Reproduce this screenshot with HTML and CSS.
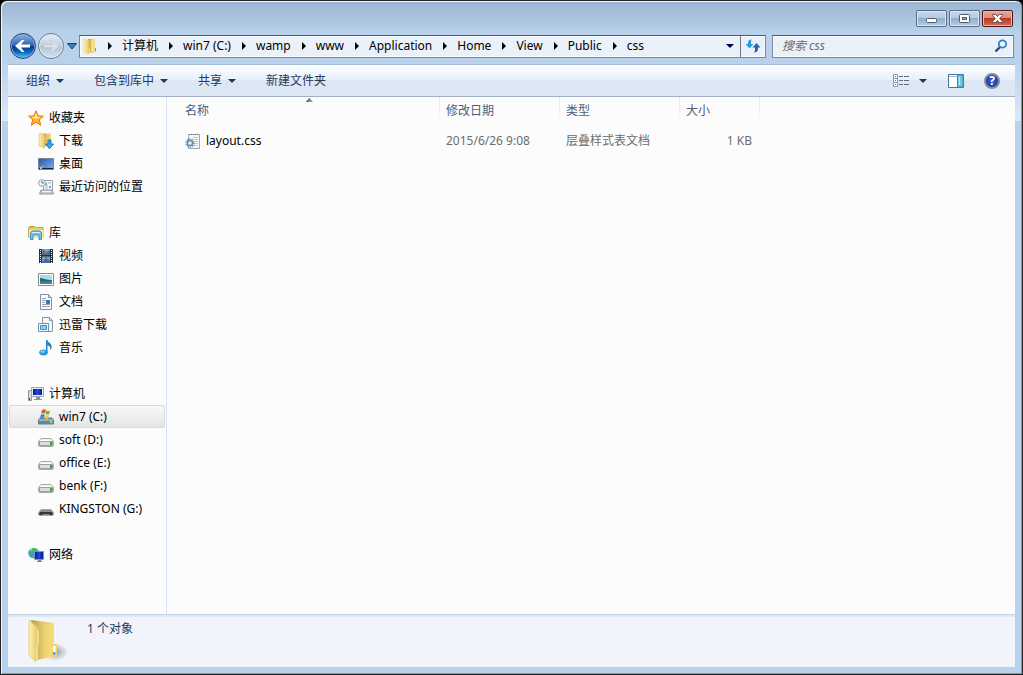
FILE: index.html
```html
<!DOCTYPE html>
<html lang="zh-CN">
<head>
<meta charset="utf-8">
<title>css</title>
<link rel="stylesheet" href="styles.css">
</head>
<body>
<svg class="defs" aria-hidden="true">
  <defs>
    <linearGradient id="gold" x1="0" x2="1"><stop offset="0" stop-color="#fff2b4"/><stop offset="1" stop-color="#e4c462"/></linearGradient>
    <linearGradient id="goldback" x1="0" x2="1"><stop offset="0" stop-color="#b99a45"/><stop offset=".45" stop-color="#e0c468"/><stop offset="1" stop-color="#f2da80"/></linearGradient>
    <linearGradient id="sky" x1="0" y1="0" x2="0" y2="1"><stop offset="0" stop-color="#8ed0f5"/><stop offset="1" stop-color="#1a7cc4"/></linearGradient>
    <linearGradient id="screen" x1="0" x2="1" y2="1"><stop offset="0" stop-color="#2354b0"/><stop offset="1" stop-color="#7fb4f0"/></linearGradient>
    <linearGradient id="mon" x1="0" x2="1"><stop offset="0" stop-color="#0618a0"/><stop offset=".5" stop-color="#2348e0"/><stop offset="1" stop-color="#0a1a90"/></linearGradient>
    <linearGradient id="metal" x1="0" y1="0" x2="0" y2="1"><stop offset="0" stop-color="#fafafa"/><stop offset="1" stop-color="#b4b7bb"/></linearGradient>
    <radialGradient id="shade"><stop offset="0" stop-color="#70757f" stop-opacity=".7"/><stop offset="1" stop-color="#70757f" stop-opacity="0"/></radialGradient>
    <symbol id="i-folder" viewBox="0 0 16 16">
      <path d="M6 1h7v10h1v3l-6 1z" fill="url(#goldback)"/>
      <path d="M2 1l5 1.500V16l-5-2z" fill="url(#gold)" stroke="#e3c769" stroke-width=".5"/>
      <path d="M9 2l4-1v12l-4 2z" fill="#f1dc88"/><path d="M13 10h1v3h-1z" fill="#4fa6e2"/>
    </symbol>
    <symbol id="i-star" viewBox="0 0 16 16"><path d="M8 .8l2.100 5 5.300.4-4.100 3.500 1.500 5.500L8 12.300l-4.700 2.900 1.400-5.500L.6 6.200l5.300-.4z" fill="#ffb62e" stroke="#e57618"/><path d="M8 2.800l1.400 4 3.800.3-5.200 2-4.800-2 3.700-.3z" fill="#ffe89a"/></symbol>
    <symbol id="i-down" viewBox="0 0 16 16">
      <path d="M5 .5h8V13H6z" fill="url(#goldback)"/><path d="M1 .5l6 1V15l-6-2z" fill="url(#gold)" stroke="#d1ad4d" stroke-width=".5"/>
      <path d="M10 7h3v4h2.500l-4 4.700L7.500 11H10z" fill="#38a5ea" stroke="#1467a8" stroke-width=".8"/>
    </symbol>
    <symbol id="i-desktop" viewBox="0 0 16 16"><path d="M.5 2.500h15v11H.5z" fill="url(#screen)" stroke="#798596"/><path d="M1 12h14v1H1z" fill="#192337"/><path d="M2 11h2v2H2z" fill="#7cdfff"/><path d="M4 10h1v1H4z" fill="#ffd84a"/></symbol>
    <symbol id="i-recent" viewBox="0 0 16 16">
      <path d="M5.500 1.500h9v10h-9z" fill="#f4f7fa" stroke="#9aa0a6"/><path d="M7 4h2v2H7zM11 7h2v2h-2z" fill="#56a8e0"/><path d="M10 4h3M7 7h3M7 9h3" stroke="#93bdd9"/>
      <path d="M3 11h11l1.500 4h-14z" fill="#c6c9cd" stroke="#93979c"/><path d="M4 12.500h9" stroke="#f6f6f6"/>
      <circle cx="4" cy="4" r="3.400" fill="#eef2f4" stroke="#9ba3a9"/><path d="M4 2v2h2" fill="none" stroke="#626d76"/>
    </symbol>
    <symbol id="i-library" viewBox="0 0 16 16"><path d="M.5 2.500l1-1h5l1.500 1h7v10H.5z" fill="#ecd06b" stroke="#c7a743"/><path d="M2 2.500h3" stroke="#63cc32"/><path d="M1 5h14v8H1z" fill="#f9e9a2"/><path d="M2.500 14.500V9c0-2 1-3 2.500-3h6c1.500 0 2.500 1 2.500 3v5.500H11V10H5v4.500z" fill="#75c5ed" stroke="#3793ca"/><path d="M4 7.500h8" stroke="#d0f3ff"/></symbol>
    <symbol id="i-video" viewBox="0 0 16 16"><path d="M1 1h14v14H1z" fill="#2c2d32"/><path d="M4 1h8v6H4zM4 8.500h8V15H4z" fill="#64a9dd"/><path d="M5 1l3 4 4-3v5H4zM5 13l3-3 4 3v2H4z" fill="#3d6ea8"/><path d="M8 3l2 2-2 2-2-2zM7 9h2v2H7z" fill="#c05a3c"/><path d="M2.500 2v13M13.500 2v13" stroke="#f5f5f5" stroke-dasharray="1 1"/></symbol>
    <symbol id="i-picture" viewBox="0 0 16 16"><path d="M.5 2.500h15v12H.5z" fill="#fff" stroke="#858b91"/><path d="M2 4h12v9H2z" fill="#abd9f4"/><path d="M2 7c3 0 6 2 12 2v2H2z" fill="#23774c"/><path d="M2 11c5-1 7 0 12-1v3H2z" fill="#3585b6"/></symbol>
    <symbol id="i-doc" viewBox="0 0 16 16"><path d="M2.500.5h8l3 3v12h-11z" fill="#fafcff" stroke="#85909a"/><path d="M10.500.5v3h3" fill="#dce3ea" stroke="#85909a"/><path d="M4 4.500h4M4 6.500h4M4 8.500h3M4 10.500h8M4 12.500h8" stroke="#96a0b1"/><path d="M8 6h4v4H8z" fill="#3677bc"/></symbol>
    <symbol id="i-thunder" viewBox="0 0 16 16"><path d="M4.500.5h7l3 3v11h-10z" fill="#f4f9fd" stroke="#8795a2"/><path d="M11.500.5v3h3" fill="none" stroke="#8795a2"/><path d="M.5 6.500h10v8H.5z" fill="#eff8ff" stroke="#7096b6"/><path d="M2.500 8.500h6v4h-6z" fill="#8fc9ef" stroke="#3d90c8"/></symbol>
    <symbol id="i-music" viewBox="0 0 16 16"><path d="M8 0h1.500c.3 2.600 4.500 3.200 4.200 7.200-.3 1.500-.8 2.200-1.500 3 .5-3-.5-4.200-2.700-4.700V13H8z" fill="#2686cb"/><ellipse cx="5.500" cy="12.500" rx="4.300" ry="3" fill="#2997df"/><ellipse cx="4.500" cy="11.500" rx="2.300" ry="1.300" fill="#81cff4"/></symbol>
    <symbol id="i-computer" viewBox="0 0 16 16"><path d="M.5 4.500h3v10h-3z" fill="#d8dde1" stroke="#8e969d"/><path d="M1 12h1v2H1z" fill="#3d4650"/><path d="M3.500 1.500h12v9h-12z" fill="#e8edf2" stroke="#a0a8b2"/><path d="M5 3h9v6H5z" fill="url(#mon)"/><path d="M8 11h4v2h2v1H6v-1h2z" fill="#8c949d"/></symbol>
    <symbol id="i-windrive" viewBox="0 0 16 16"><path d="M2 9h12l1.500 2v4H.5v-4z" fill="#64859b" stroke="#70808c"/><path d="M1 11h14" stroke="#c6dde8"/><path d="M12 12h2v2h-2z" fill="#7bef57"/><path d="M4 1c2-1 3-1 4 0L7 4.500C6 4 5 4 3 4.500z" fill="#e55b24"/><path d="M8.500 1.500c1 .8 2 .8 3.500 0l-1 3.500c-1 .8-2 .5-3.500 0z" fill="#68b829"/><path d="M3 5.500C4 5 5 5 6.700 5.500L6 9C5 8.500 4 8.500 2 9z" fill="#3189d3"/><path d="M7.500 6c1 .6 2 .6 3.300 0L10 9.500c-1 .6-2 .5-3.500-.2z" fill="#ffc62b"/></symbol>
    <symbol id="i-drive" viewBox="0 0 16 16"><path d="M3 6.500h10l2.500 3v4l-1 1h-13l-1-1v-4z" fill="url(#metal)" stroke="#a4a8ac"/><path d="M2 8.500h12" stroke="#fff"/><path d="M1.500 9.500h13v4h-13z" fill="#dcdee2" stroke="#9da1a6"/><path d="M12 10h2v3h-2z" fill="#35a91e"/></symbol>
    <symbol id="i-usb" viewBox="0 0 16 16"><path d="M3 8.500h10l2.500 3v2l-1 1h-13l-1-1v-2z" fill="#8a8d90" stroke="#a4a7aa"/><path d="M2 11h12l1 3h-3l-1-1H5l-1 1H1z" fill="#34373a"/></symbol>
    <symbol id="i-network" viewBox="0 0 16 16"><circle cx="5.500" cy="6" r="5.300" fill="#329fd8"/><path d="M1 4l3-3 3 .5L6 4 3 5v3zM4 10l3-3 2 1-3 3zM8 1l3 3-2 1z" fill="#4fc242"/><path d="M2 3l2-1" stroke="#d5fbff"/><path d="M6.500 4.500h9v8h-9z" fill="#dfe6ec" stroke="#8794a3"/><path d="M7 5h8v7H7z" fill="url(#mon)"/><path d="M10 13h3v1h1v1H9v-1h1z" fill="#7d8790"/></symbol>
    <symbol id="i-css" viewBox="0 0 16 16"><path d="M3.500 1.500h11v14h-11z" fill="#f5f6f6" stroke="#a5a8aa"/><path d="M4 1.500h10" stroke="#73777a" stroke-dasharray="1 1"/><path d="M8 4.500h5M9 6.500h4M10 8.500h3M10 10.500h3M8 12.500h5" stroke="#c5c8cb"/><circle cx="5" cy="10" r="4" fill="none" stroke="#7391ad" stroke-width="1.500" stroke-dasharray="1.400 1.100"/><circle cx="5" cy="10" r="2.600" fill="#e8eff5" stroke="#6888a8" stroke-width="1.500"/></symbol>
  </defs>
</svg>
<div class="window">
  <header class="frame">
    <div class="caption">
      <button class="cap" aria-label="最小化"><svg width="29" height="15" viewBox="0 0 29 15"><rect x="9.500" y="7.500" width="10" height="4" rx="1" fill="#fff" stroke="#525c70"/></svg></button>
      <button class="cap" aria-label="最大化"><svg width="29" height="15" viewBox="0 0 29 15"><rect x="9.500" y="3.500" width="10" height="8" rx="1" fill="#fff" stroke="#525c70"/><rect x="12.500" y="6.500" width="4" height="2" fill="#9cb6d3" stroke="#525c70"/></svg></button>
      <button class="cap close" aria-label="关闭"><svg width="29" height="15" viewBox="0 0 29 15"><path d="M9.500 3.500h3.300l1.700 2 1.700-2h3.300v.8L16.700 7.500l2.800 3.200v.8h-3.300l-1.700-2-1.700 2H9.500v-.8l2.800-3.200-2.800-3.200z" fill="#fff" stroke="#5b5564"/></svg></button>
    </div>
    <div class="navbar">
      <div class="history">
        <button class="round back" aria-label="后退"><svg width="24" height="24" viewBox="0 0 24 24"><path d="M4 12l7-6h2.500l-3.500 4.400h9v3.200h-9l3.500 4.400H11z" fill="#fff"/></svg></button>
        <button class="round" aria-label="前进"><svg width="24" height="24" viewBox="0 0 24 24"><path d="M20 12l-7-6h-2.500l3.500 4.400H5v3.200h9L10.500 18H13z" fill="#d9e3ec" stroke="#b6c5d3" stroke-width=".6"/></svg></button>
        <button class="recent" aria-label="最近浏览的位置"><svg width="10" height="7" viewBox="0 0 10 7"><path d="M.5.500h9L5 6z" fill="#3087bc" stroke="#203b72"/></svg></button>
      </div>
      <div class="address">
        <svg class="icon" aria-hidden="true"><use href="#i-folder"/></svg>
        <nav class="crumbs" aria-label="地址">
          <a href="#">计算机</a><a href="#">win7 (C:)</a><a href="#">wamp</a><a href="#">www</a><a href="#">Application</a><a href="#">Home</a><a href="#">View</a><a href="#">Public</a><a href="#">css</a>
        </nav>
        <button class="drop" aria-label="以前的位置"><i class="caret"></i></button>
        <button class="refresh" aria-label="刷新"><svg width="16" height="14" viewBox="0 0 16 14"><path d="M7 .5C4.500.500 3 1.500 3 4v1H.5l4 4.500L8.500 5H6V3c0-1 .3-1.500 1-2.500z" fill="#2e9bd9"/><path d="M9 13.500c2.500 0 4-1 4-4v-1h2.500L11.500 4 7.500 8.500H10v2c0 1.500-.3 2-1 3z" fill="#2667ad"/></svg></button>
      </div>
      <form class="search">
        <input type="search" aria-label="搜索 css" placeholder="搜索 css">
        <button type="button" aria-label="搜索"><svg width="14" height="14" viewBox="0 0 14 14"><path d="M1.500 12.500L6 8" stroke="#25488d" stroke-width="2.400"/><circle cx="8.500" cy="5" r="3.700" fill="#e9f4fb" stroke="#2d83c6" stroke-width="1.800"/></svg></button>
      </form>
    </div>
  </header>
  <div class="client">
    <div class="toolbar">
      <button>组织<i class="caret"></i></button>
      <button>包含到库中<i class="caret"></i></button>
      <button>共享<i class="caret"></i></button>
      <button>新建文件夹</button>
      <div class="views">
        <button class="viewmode" aria-label="更改您的视图"><svg width="16" height="14" viewBox="0 0 16 14"><path d="M.5.500h4v4h-4zM.5 4.500h4v4h-4zM.5 8.500h4v4h-4z" fill="#fff" stroke="#8b98a8"/><path d="M2 2h1v1H2zM2 10h1v1H2z" fill="#3c72a0"/><path d="M2 6h1v1H2z" fill="#a5563c"/><path d="M6 2.500h4M11 2.500h5M6 6.500h4M11 6.500h5M6 10.500h4M11 10.500h5" stroke="#5b6c84"/></svg></button>
        <button class="viewdrop" aria-label="更多选项"><i class="caret"></i></button>
        <button class="preview" aria-label="显示预览窗格"><svg width="16" height="14" viewBox="0 0 16 14"><path d="M.5.500h15v13H.5z" fill="#fff" stroke="#4f6f96"/><path d="M1 2.500h9" stroke="#a5b9cf"/><path d="M9.500 1h5.500v12H9.500z" fill="#69cce1" stroke="#4d87ae"/><path d="M11.500 3v8" stroke="#b8f2f7"/></svg></button>
        <button aria-label="获取帮助" class="help">?</button>
      </div>
    </div>
    <div class="body">
      <nav class="tree" aria-label="导航窗格">
        <ul>
          <li><a class="root" href="#"><svg class="icon"><use href="#i-star"/></svg>收藏夹</a></li>
          <li><a href="#"><svg class="icon"><use href="#i-down"/></svg>下载</a></li>
          <li><a href="#"><svg class="icon"><use href="#i-desktop"/></svg>桌面</a></li>
          <li><a href="#"><svg class="icon"><use href="#i-recent"/></svg>最近访问的位置</a></li>
        </ul>
        <ul>
          <li><a class="root" href="#"><svg class="icon"><use href="#i-library"/></svg>库</a></li>
          <li><a href="#"><svg class="icon"><use href="#i-video"/></svg>视频</a></li>
          <li><a href="#"><svg class="icon"><use href="#i-picture"/></svg>图片</a></li>
          <li><a href="#"><svg class="icon"><use href="#i-doc"/></svg>文档</a></li>
          <li><a href="#"><svg class="icon"><use href="#i-thunder"/></svg>迅雷下载</a></li>
          <li><a href="#"><svg class="icon"><use href="#i-music"/></svg>音乐</a></li>
        </ul>
        <ul>
          <li><a class="root" href="#"><svg class="icon"><use href="#i-computer"/></svg>计算机</a></li>
          <li><a class="selected" href="#" aria-current="true"><svg class="icon"><use href="#i-windrive"/></svg>win7 (C:)</a></li>
          <li><a href="#"><svg class="icon"><use href="#i-drive"/></svg>soft (D:)</a></li>
          <li><a href="#"><svg class="icon"><use href="#i-drive"/></svg>office (E:)</a></li>
          <li><a href="#"><svg class="icon"><use href="#i-drive"/></svg>benk (F:)</a></li>
          <li><a href="#"><svg class="icon"><use href="#i-usb"/></svg>KINGSTON (G:)</a></li>
        </ul>
        <ul>
          <li><a class="root" href="#"><svg class="icon"><use href="#i-network"/></svg>网络</a></li>
        </ul>
      </nav>
      <main class="files">
        <table>
          <thead>
            <tr><th class="name" aria-sort="ascending">名称<svg class="sort" width="7" height="4" viewBox="0 0 7 4"><path d="M0 4l3.500-4L7 4z" fill="#5a9dbd"/><path d="M0 4l3.500-4v1L1.500 4z" fill="#31566f"/></svg></th><th>修改日期</th><th>类型</th><th class="size">大小</th></tr>
          </thead>
          <tbody>
            <tr><td class="name"><a href="#"><svg class="icon"><use href="#i-css"/></svg>layout.css</a></td><td>2015/6/26 9:08</td><td>层叠样式表文档</td><td class="size">1 KB</td></tr>
          </tbody>
        </table>
      </main>
    </div>
    <footer class="details">
      <svg width="42" height="46" viewBox="0 0 42 46" aria-hidden="true">
        <ellipse cx="27" cy="33" rx="13" ry="9" fill="url(#shade)"/>
        <path d="M3 1l23 3v33L9 41z" fill="url(#goldback)"/>
        <path d="M16 5l10-1v33l-10 3z" fill="#f5dd78" opacity=".5"/>
        <path d="M1 1l8 7c1 1 1 2 1 3v14l-1 3v13l-1.500 1.500L1 36z" fill="url(#gold)" stroke="#e2c462" stroke-width=".7"/>
        <path d="M10 11v14l-1 3v13" fill="none" stroke="#fff3bd"/>
        <path d="M24 25h5v12.500L24 39z" fill="#f0d36d"/><path d="M25 27h2.500v9H25z" fill="#fff"/><path d="M25 33h2.500v3H25z" fill="#50a6e8"/>
      </svg>
      <span>1 个对象</span>
    </footer>
  </div>
</div>
</body>
</html>
```

FILE: styles.css
```css
* { box-sizing: border-box; }
body {
  margin: 0;
  background: #000;
  font: 12px/16px "Noto Sans", "Noto Sans CJK SC", sans-serif;
  color: #000;
}
button, input {
  font: inherit;
  color: inherit;
  background: none;
  border: 0;
  padding: 0;
  margin: 0;
}
a { color: inherit; text-decoration: none; }
svg { display: block; flex: none; }
.defs { position: absolute; width: 0; height: 0; }
.icon { width: 16px; height: 16px; }

.window {
  min-height: 100vh;
  display: flex;
  flex-direction: column;
  padding: 0 7px 7px;
  border: 1px solid #222;
  border-radius: 7px 7px 0 0;
  background: linear-gradient(#99b4d1, #b9d1ea 32px, #b9d1ea 58px, #dce8f6 120px, #b9d1ea 120px);
  box-shadow: inset 1px 1px #f2f7fc, inset -1px -1px #37bdd2;
}
.frame { background: linear-gradient(#99b4d100 32px, #b9d1ea 32px); }

.caption {
  display: flex;
  justify-content: flex-end;
  gap: 2px;
  padding: 9px 2px 0 0;
}
.cap {
  width: 31px;
  height: 17px;
  border: 1px solid #596d8a;
  border-radius: 2px;
  background: linear-gradient(#c7d8ea, #b2c9e1 50%, #92adc9 50%, #b4cce4);
  box-shadow: inset 0 0 0 1px #dce8f5;
}
.close {
  border-color: #4b1520;
  background: linear-gradient(#e9a99b, #d98878 50%, #b83a20 50%, #d46b4a);
  box-shadow: inset 0 0 0 1px #eeb8aa;
}

.navbar {
  display: flex;
  align-items: center;
  padding: 6px 1px 5px 2px;
}
.history { display: flex; align-items: center; }
.round {
  display: grid;
  place-content: center;
  width: 26px;
  height: 26px;
  margin-right: 2px;
  border: 1px solid #6c8095;
  border-radius: 50%;
  background: linear-gradient(#e4edf5, #bfd0df 50%, #aec4d7 50%, #d5e3ef);
  box-shadow: inset 0 0 0 1px #e6eef5;
}
.back {
  border-color: #29477b;
  background: linear-gradient(#8db3e2, #2c61b2 48%, #062f85 50%, #0b66bc 75%, #39d0f6);
  box-shadow: inset 0 0 0 1px #87a8d4;
}
.recent { margin-left: 1px; }
.address, .search {
  display: flex;
  align-items: center;
  height: 23px;
  border: 1px solid #7a8797;
  border-top-color: #4e5965;
  background: #eaf1f9;
  box-shadow: inset 0 0 0 1px #f8fbff;
}
.address { flex: 1; min-width: 0; margin-left: 2px; padding-left: 2px; }
.crumbs { flex: 1; display: flex; min-width: 0; overflow: hidden; white-space: nowrap; }
.crumbs a { display: flex; align-items: center; }
.crumbs a::before {
  content: "";
  margin: 0 10px 0 11px;
  border: solid transparent;
  border-width: 4px 0 4px 4px;
  border-left-color: #000;
}
.crumbs a:first-child::before { margin-left: 10px; }
.caret {
  display: block;
  border: solid transparent;
  border-width: 4px 4px 0;
  border-top-color: #1e395b;
}
.drop { padding: 8px 6px; }
.drop .caret { border-top-color: #000050; }
.refresh { align-self: stretch; padding: 0 4px; border-left: 1px solid #687584; }
.search { flex: 0 1 242px; margin-left: 6px; padding: 0 5px 0 9px; }
.search input { flex: 1; min-width: 0; outline: 0; font-style: italic; }
.search input::placeholder { color: #6d6d6d; opacity: 1; }

.client {
  flex: 1;
  display: flex;
  flex-direction: column;
  border-top: 1px solid #a3bcd9;
  background: #fcfcfc;
}
.toolbar {
  display: flex;
  align-items: center;
  gap: 30px;
  height: 32px;
  padding: 0 15px 0 18px;
  border-bottom: 1px solid #a0afc3;
  background: linear-gradient(#fcfeff, #e6effa 50%, #dce6f4 50%, #dde8f5);
  color: #1e395b;
}
.toolbar button { display: flex; align-items: center; gap: 6px; }
.views { display: flex; align-items: center; margin-left: auto; }
.viewdrop { margin-left: 10px; }
.preview { margin: 0 20px 0 21px; }
.toolbar .help {
  justify-content: center;
  width: 16px;
  height: 16px;
  border: 2px solid #8a8d98;
  border-radius: 50%;
  background: radial-gradient(#3c6ae0, #12267e);
  color: #fff;
  font-weight: bold;
}

.body { flex: 1; display: flex; }
.tree { flex: 0 0 159px; padding-top: 9px; border-right: 1px solid #d6e5f5; }
.tree ul { list-style: none; margin: 0 0 23px; padding: 0 1px; }
.tree ul:last-child { margin: 0; }
.tree a {
  display: flex;
  align-items: center;
  gap: 5px;
  height: 23px;
  padding-left: 28px;
  border: 1px solid transparent;
  border-radius: 2px;
  white-space: nowrap;
}
.tree .root { padding-left: 18px; }
.tree .selected { border-color: #d9d9d9; background: linear-gradient(#f8f8f8, #e5e5e5); }

.files { flex: 1; min-width: 0; }
table { border-collapse: collapse; table-layout: fixed; width: 593px; color: #6d6d6d; }
th, td { width: 120px; padding: 0 0 0 6px; text-align: left; font-weight: normal; white-space: nowrap; }
th {
  position: relative;
  height: 27px;
  color: #4c607a;
  background: linear-gradient(#dce8f5, #fcfcfc) right / 1px 100% no-repeat;
}
td { height: 34px; }
.name { width: 273px; padding-left: 18px; }
.size { width: 80px; }
td.size { text-align: right; padding-right: 8px; }
td a { display: flex; align-items: center; gap: 5px; color: #000; }
.sort { position: absolute; top: 1px; left: calc(50% + 2px); }

.details {
  display: flex;
  gap: 17px;
  min-height: 53px;
  padding: 4px 20px 0;
  border-top: 1px solid #c5d6e8;
  background: #f1f4fb;
  box-shadow: inset 0 2px 1px #dfe8f2;
  color: #1e395b;
}
.details span { padding-top: 2px; }
```
